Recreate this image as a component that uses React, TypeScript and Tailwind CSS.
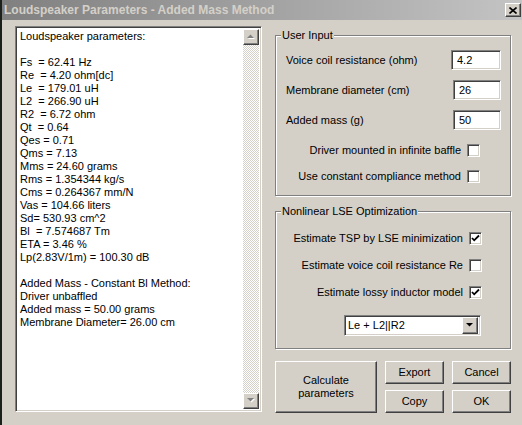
import React from "react";

const raised =
  "border border-t-white border-l-white border-r-[#404040] border-b-[#404040] shadow-[inset_-1px_-1px_0_#808080] bg-[#d4d0c8]";
const sunken =
  "border border-t-[#808080] border-l-[#808080] border-r-white border-b-white shadow-[inset_1px_1px_0_#404040,inset_-1px_-1px_0_#d4d0c8] bg-white";

const lines = [
  "Loudspeaker parameters:",
  "",
  "Fs  = 62.41 Hz",
  "Re  = 4.20 ohm[dc]",
  "Le  = 179.01 uH",
  "L2  = 266.90 uH",
  "R2  = 6.72 ohm",
  "Qt  = 0.64",
  "Qes = 0.71",
  "Qms = 7.13",
  "Mms = 24.60 grams",
  "Rms = 1.354344 kg/s",
  "Cms = 0.264367 mm/N",
  "Vas = 104.66 liters",
  "Sd= 530.93 cm^2",
  "Bl  = 7.574687 Tm",
  "ETA = 3.46 %",
  "Lp(2.83V/1m) = 100.30 dB",
  "",
  "Added Mass - Constant Bl Method:",
  "Driver unbaffled",
  "Added mass = 50.00 grams",
  "Membrane Diameter= 26.00 cm",
];

function Arrow({ up, disabled }: { up: boolean; disabled?: boolean }) {
  const pts = up ? "0,4 7,4 3.5,0.5" : "0,0 7,0 3.5,3.5";
  return (
    <svg width="9" height="6" viewBox="0 0 9 6">
      {disabled && (
        <polygon points={pts} fill="#ffffff" transform="translate(1,1)" />
      )}
      <polygon points={pts} fill={disabled ? "#808080" : "#000000"} />
    </svg>
  );
}

function CheckBox({ checked }: { checked?: boolean }) {
  return (
    <div className={"w-[13px] h-[13px] flex items-center justify-center " + sunken}>
      {checked && (
        <svg width="9" height="9" viewBox="0 0 9 9">
          <polyline
            points="1,4 3.2,6.3 8,1.5"
            fill="none"
            stroke="#000"
            strokeWidth="1.8"
          />
        </svg>
      )}
    </div>
  );
}

function CheckRow({
  label,
  checked,
  pr,
}: {
  label: string;
  checked?: boolean;
  pr: string;
}) {
  return (
    <div className={"flex items-center justify-end gap-[6px] h-[13px] " + pr}>
      <span className="leading-[13px] whitespace-nowrap">{label}</span>
      <CheckBox checked={checked} />
    </div>
  );
}

function InputRow({ label, value, w }: { label: string; value: string; w: string }) {
  return (
    <div className="flex items-center justify-between h-[20px] pl-[10px] pr-[9px]">
      <span className="whitespace-nowrap">{label}</span>
      <div className={"h-[20px] flex items-center pl-[5px] " + w + " " + sunken}>
        <span>{value}</span>
      </div>
    </div>
  );
}

function Group({
  label,
  className,
  children,
}: {
  label: string;
  className: string;
  children: React.ReactNode;
}) {
  return (
    <div
      className={
        "relative border border-[#808080] shadow-[inset_1px_1px_0_#ffffff,1px_1px_0_#ffffff] " +
        className
      }
    >
      <span className="absolute -top-[8px] left-[5px] bg-[#d4d0c8] px-[1px] leading-[14px] whitespace-nowrap">
        {label}
      </span>
      {children}
    </div>
  );
}

export default function App() {
  return (
    <div className="w-[522px] h-[425px] flex bg-[#d4d0c8] overflow-hidden font-['Liberation_Sans',Arial,sans-serif] text-[11px] text-black">
      <div className="w-[2px] bg-[#1b201b]" />
      <div className="flex-1 flex flex-col">
        {/* Title bar */}
        <div className="h-[20px] flex items-center bg-linear-to-r from-[#808080] to-[#c4c4c4] pl-[2px] pr-[1px]">
          <span className="flex-1 text-[12px] font-bold text-[#d4d0c8] whitespace-nowrap leading-[20px]">
            Loudspeaker Parameters - Added Mass Method
          </span>
          <div className={"w-[16px] h-[14px] flex items-center justify-center " + raised}>
            <svg width="8" height="7" viewBox="0 0 8 7">
              <path d="M0.5 0.5 L7.5 6.5 M7.5 0.5 L0.5 6.5" stroke="#000" strokeWidth="1.6" />
            </svg>
          </div>
        </div>

        {/* Body */}
        <div className="flex pt-[6px] pl-[13px] gap-[13px]">
          {/* Text box */}
          <div className={"w-[247px] h-[386px] flex p-[2px] " + sunken}>
            <div className="flex-1 pl-[2px] pt-[1px] leading-[13px] whitespace-pre">
              {lines.map((l, i) => (
                <div key={i} className="h-[13px]">
                  {l}
                </div>
              ))}
            </div>
            <div className="w-[16px] flex flex-col">
              <div className={"h-[16px] flex items-center justify-center " + raised}>
                <Arrow up disabled />
              </div>
              <div className="flex-1 bg-[image:repeating-conic-gradient(#ffffff_0%_25%,#d4d0c8_0%_50%)] bg-[length:2px_2px]" />
              <div className={"h-[16px] flex items-center justify-center " + raised}>
                <Arrow up={false} disabled />
              </div>
            </div>
          </div>

          {/* Right column */}
          <div className="w-[236px] flex flex-col">
            <Group label="User Input" className="mt-[9px] h-[161px] pt-[14px] flex flex-col">
              <div className="flex flex-col gap-[10px]">
                <InputRow label="Voice coil resistance (ohm)" value="4.2" w="w-[50px]" />
                <InputRow label="Membrane diameter (cm)" value="26" w="w-[48px]" />
                <InputRow label="Added mass (g)" value="50" w="w-[48px]" />
              </div>
              <div className="mt-[14px] flex flex-col gap-[13px]">
                <CheckRow label="Driver mounted in infinite baffle" pr="pr-[30px]" />
                <CheckRow label="Use constant compliance method" pr="pr-[30px]" />
              </div>
            </Group>

            <Group label="Nonlinear LSE Optimization" className="mt-[15px] h-[138px] pt-[20px] flex flex-col">
              <div className="flex flex-col gap-[14px]">
                <CheckRow label="Estimate TSP by LSE minimization" checked pr="pr-[28px]" />
                <CheckRow label="Estimate voice coil resistance Re" pr="pr-[28px]" />
                <CheckRow label="Estimate lossy inductor model" checked pr="pr-[28px]" />
              </div>
              <div className="mt-[16px] flex justify-end pr-[29px]">
                <div className={"w-[137px] h-[21px] flex items-center p-[2px] " + sunken}>
                  <span className="flex-1 pl-[1px]">Le + L2||R2</span>
                  <div className={"w-[16px] h-[17px] flex items-center justify-center " + raised}>
                    <Arrow up={false} />
                  </div>
                </div>
              </div>
            </Group>

            <div className="mt-[12px] flex gap-[8px]">
              <button className={"w-[102px] h-[52px] flex items-center justify-center text-center leading-[13px] " + raised}>
                Calculate
                <br />
                parameters
              </button>
              <div className="flex flex-col gap-[6px]">
                <button className={"w-[59px] h-[23px] " + raised}>Export</button>
                <button className={"w-[59px] h-[23px] " + raised}>Copy</button>
              </div>
              <div className="flex flex-col gap-[6px]">
                <button className={"w-[59px] h-[23px] " + raised}>Cancel</button>
                <button className={"w-[59px] h-[23px] " + raised}>OK</button>
              </div>
            </div>
          </div>
        </div>
      </div>
    </div>
  );
}
